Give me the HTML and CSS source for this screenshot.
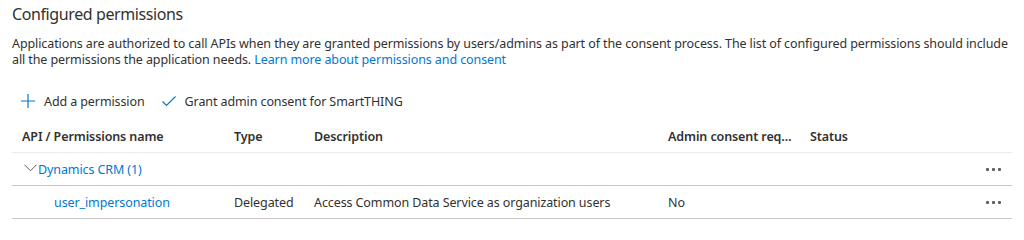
FILE: index.html
```html
<!DOCTYPE html>
<html lang="en">
<head>
  <meta charset="UTF-8">
  <title>Configured permissions</title>
  <meta name="viewport" content="width=device-width, initial-scale=1.0">
  <link rel="stylesheet" href="styles.css">
</head>
<body>
  <div class="section">
    <h2>Configured permissions</h2>
    <p class="intro">Applications are authorized to call APIs when they are granted permissions by users/admins as part of the consent process. The list of configured permissions should include all the permissions the application needs. <a href="#">Learn more about permissions and consent</a></p>

    <div class="toolbar">
      <button class="tool">
        <svg width="16" height="16" viewBox="0 0 16 16"><path d="M8 1v14M1 8h14" stroke="#0078d4" stroke-width="1.2" fill="none"/></svg>
        Add a permission
      </button>
      <button class="tool">
        <svg width="16" height="16" viewBox="0 0 16 16"><path d="M1.5 8.5l4 4 9-9" stroke="#0078d4" stroke-width="1.2" fill="none"/></svg>
        Grant admin consent for SmartTHING
      </button>
    </div>

    <div class="grid">
      <div class="row head">
        <div class="cell">API / Permissions name</div>
        <div class="cell">Type</div>
        <div class="cell">Description</div>
        <div class="cell clip">Admin consent required</div>
        <div class="cell">Status</div>
        <div class="cell"></div>
      </div>

      <div class="row group">
        <div class="cell span">
          <svg class="chev" width="13" height="8" viewBox="0 0 13 8"><path d="M0.5 0.8l6 6 6-6" stroke="#605e5c" stroke-width="1" fill="none"/></svg>
          <a href="#">Dynamics CRM (1)</a>
        </div>
        <div class="cell more"><span></span><span></span><span></span></div>
      </div>

      <div class="row item">
        <div class="cell name"><a href="#">user_impersonation</a></div>
        <div class="cell">Delegated</div>
        <div class="cell">Access Common Data Service as organization users</div>
        <div class="cell">No</div>
        <div class="cell"></div>
        <div class="cell more"><span></span><span></span><span></span></div>
      </div>
    </div>
  </div>
</body>
</html>
```

FILE: styles.css
```css
body {
  margin: 0;
  background-color: #fff;
  font-family: "Noto Sans", sans-serif;
  color: #323130;
  font-size: 12.5px;
  letter-spacing: -0.1px;
}
.section {
  padding: 2px 12px 0 12px;
}
h2 {
  font-size: 16px;
  font-weight: 400;
  line-height: 24px;
  margin: 0;
  letter-spacing: -0.4px;
}
.intro {
  margin: 10px 0 0 0;
  line-height: 16px;
}
a {
  color: #0078d4;
  text-decoration: none;
}
.toolbar {
  display: flex;
  margin-top: 17px;
  height: 32px;
  align-items: center;
}
.tool {
  display: flex;
  align-items: center;
  gap: 8px;
  background: none;
  border: none;
  padding: 0 8px;
  font-family: inherit;
  font-size: 12.5px;
  letter-spacing: -0.1px;
  color: #323130;
  cursor: pointer;
}
.grid {
  margin-top: 3px;
}
.row {
  display: grid;
  grid-template-columns: 212px 80px 354px 142px 1fr 40px;
  height: 32px;
  align-items: center;
  border-bottom: 1px solid #c8c6c4;
}
.row.head {
  border-bottom-color: #edebe9;
  font-weight: 600;
}
.row.group {
  grid-template-columns: 1fr 40px;
}
.cell {
  padding-left: 10px;
  white-space: nowrap;
}
.clip {
  overflow: hidden;
  text-overflow: ellipsis;
  padding-right: 2px;
}
.span {
  display: flex;
  align-items: center;
  gap: 1px;
  padding-left: 12px;
}
.chev {
  margin-bottom: 2px;
}
.name {
  padding-left: 42px;
}
.more {
  display: flex;
  gap: 3px;
  padding-left: 14px;
}
.more span {
  width: 3px;
  height: 3px;
  background-color: #605e5c;
  border-radius: 1px;
}
```
